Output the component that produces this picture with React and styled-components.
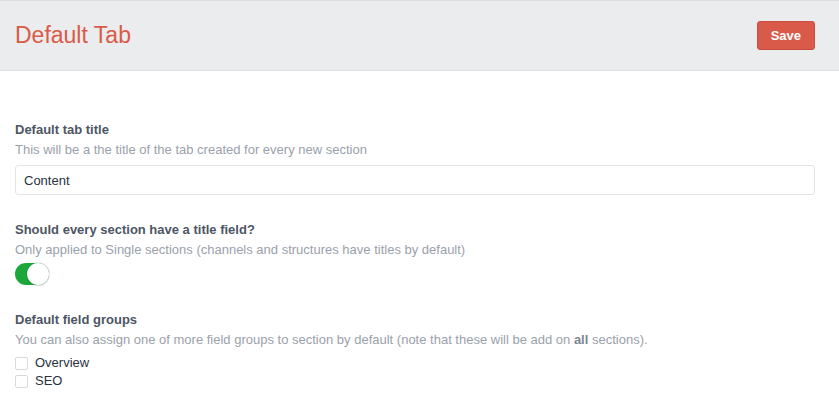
import { useState } from "react";
import styled, { createGlobalStyle } from "styled-components";

const GlobalStyle = createGlobalStyle`
  html, body {
    margin: 0;
    padding: 0;
    background: #fff;
  }
  body {
    font-family: "Liberation Sans", Arial, sans-serif;
    font-size: 13px;
    color: #29323d;
    -webkit-font-smoothing: antialiased;
  }
`;

const Page = styled.div`
  width: 839px;
  min-height: 413px;
  border-top: 1px solid #dcdde0;
  box-sizing: border-box;
`;

const Header = styled.header`
  display: flex;
  align-items: center;
  justify-content: space-between;
  height: 70px;
  padding: 0 24px 0 15px;
  background: #ebecee;
  border-bottom: 1px solid #dddee1;
  box-sizing: border-box;
`;

const Title = styled.h1`
  margin: 0;
  font-size: 23px;
  font-weight: 400;
  color: #da5a47;
`;

const SaveButton = styled.button`
  height: 29px;
  padding: 0 13px;
  border: 1px solid #c94d3f;
  border-radius: 3px;
  background: #da5a4a;
  color: #fff;
  font-family: inherit;
  font-size: 13px;
  font-weight: 700;
  cursor: pointer;
`;

const Body = styled.main`
  display: flex;
  flex-direction: column;
  gap: 26px;
  padding: 50px 24px 20px 15px;
`;

const Field = styled.section`
  display: flex;
  flex-direction: column;
`;

const Label = styled.label`
  font-weight: 700;
  color: #4d5664;
  line-height: 18px;
`;

const Help = styled.p`
  margin: 2px 0 6px;
  color: #9aa1ab;
  line-height: 18px;

  strong {
    color: #7d8590;
  }
`;

const TextInput = styled.input`
  height: 30px;
  padding: 0 8px;
  border: 1px solid #e3e4e6;
  border-radius: 3px;
  font-family: inherit;
  font-size: 13px;
  color: #29323d;
  box-sizing: border-box;
  outline: none;
`;

const Switch = styled.button`
  position: relative;
  width: 34px;
  height: 22px;
  margin-top: -2px;
  padding: 0;
  border: none;
  border-radius: 11px;
  background: ${({ $on }) => ($on ? "#1aa83a" : "#e3e4e6")};
  cursor: pointer;

  &::after {
    content: "";
    position: absolute;
    top: 0;
    left: ${({ $on }) => ($on ? "12px" : "0")};
    width: 22px;
    height: 22px;
    border-radius: 50%;
    background: #fff;
    box-shadow: 0 0 0 1px rgba(0, 0, 0, 0.08), 0 1px 2px rgba(0, 0, 0, 0.1);
    box-sizing: border-box;
  }
`;

const CheckList = styled.div`
  display: flex;
  flex-direction: column;
  gap: 2px;
`;

const CheckRow = styled.label`
  display: flex;
  align-items: center;
  gap: 7px;
  color: #29323d;
  line-height: 16px;
`;

const Box = styled.span`
  width: 11px;
  height: 11px;
  border: 1px solid #d8d9dc;
  border-radius: 2px;
  background: #fff;
`;

export default function App() {
  const [title, setTitle] = useState("Content");
  const [on, setOn] = useState(true);

  return (
    <>
      <GlobalStyle />
      <Page>
        <Header>
          <Title>Default Tab</Title>
          <SaveButton>Save</SaveButton>
        </Header>
        <Body>
          <Field>
            <Label>Default tab title</Label>
            <Help>This will be a the title of the tab created for every new section</Help>
            <TextInput value={title} onChange={(e) => setTitle(e.target.value)} />
          </Field>
          <Field>
            <Label>Should every section have a title field?</Label>
            <Help>Only applied to Single sections (channels and structures have titles by default)</Help>
            <Switch $on={on} onClick={() => setOn(!on)} aria-label="Title field" />
          </Field>
          <Field>
            <Label>Default field groups</Label>
            <Help>
              You can also assign one of more field groups to section by default (note that these will be add on <strong>all</strong> sections).
            </Help>
            <CheckList>
              <CheckRow>
                <Box />
                Overview
              </CheckRow>
              <CheckRow>
                <Box />
                SEO
              </CheckRow>
            </CheckList>
          </Field>
        </Body>
      </Page>
    </>
  );
}
